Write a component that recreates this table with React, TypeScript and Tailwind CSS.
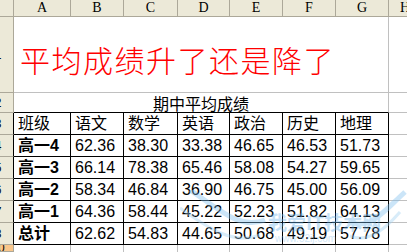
const letters = ["A", "B", "C", "D", "E", "F", "G"];

const table: string[][] = [
  ["班级", "语文", "数学", "英语", "政治", "历史", "地理"],
  ["高一4", "62.36", "38.30", "33.38", "46.65", "46.53", "51.73"],
  ["高一3", "66.14", "78.38", "65.46", "58.08", "54.27", "59.65"],
  ["高一2", "58.34", "46.84", "36.90", "46.75", "45.00", "56.09"],
  ["高一1", "64.36", "58.44", "45.22", "52.23", "51.82", "64.13"],
  ["总计", "62.62", "54.83", "44.65", "50.68", "49.19", "57.78"],
];

function RowHead({ n, black, active }: { n: number; black?: boolean; active?: boolean }) {
  return (
    <div
      className={`flex items-center overflow-hidden border-b border-r border-b-[#aca899] ${
        black ? "border-r-black" : "border-r-[#aca899]"
      } ${active ? "bg-[#f9c68b]" : "bg-[#ece9d8]"}`}
    >
      <div className="ml-[-16px] w-[28px] shrink-0 text-center font-['Liberation_Sans',sans-serif] text-[12px] text-black">
        {n}
      </div>
    </div>
  );
}

export default function App() {
  return (
    <div className="relative h-[252px] w-[407px] overflow-hidden bg-white font-['Liberation_Sans','Noto_Sans_CJK_SC',sans-serif] text-black">
      <div className="grid h-full w-full grid-cols-[14px_57px_53px_54px_52px_53px_53px_53px_1fr] grid-rows-[17px_76px_20px_repeat(6,22px)_1fr]">
        {/* column headers */}
        <div className="border-b border-r border-[#aca899] bg-[#ece9d8]" />
        {letters.map((l) => (
          <div
            key={l}
            className="flex items-center justify-center border-b border-r border-[#aca899] bg-[#ece9d8] font-['Liberation_Serif',serif] text-[14px] leading-none"
          >
            {l}
          </div>
        ))}
        <div className="flex items-center border-b border-[#aca899] bg-[#ece9d8] pl-[11px] font-['Liberation_Serif',serif] text-[14px] leading-none">
          H
        </div>

        {/* row 1: title */}
        <RowHead n={1} />
        <div className="col-span-7 flex items-center border-b border-r border-[#c0c0c0] pl-[6px] pt-[8px] font-['Noto_Sans_CJK_SC',sans-serif] text-[30px] font-light leading-none tracking-[1.5px] text-[#ff0000]">
          平均成绩升了还是降了
        </div>
        <div className="border-b border-[#c0c0c0]" />

        {/* row 2: subtitle */}
        <RowHead n={2} />
        <div className="col-span-7 flex items-center justify-center border-b border-r border-b-black border-r-[#c0c0c0] pt-[1px] font-['Noto_Sans_CJK_SC',sans-serif] text-[16px] leading-none">
          期中平均成绩
        </div>
        <div className="border-b border-[#c0c0c0]" />

        {/* table rows */}
        {table.map((row, r) => (
          <div key={r} className="contents">
            <RowHead n={r + 3} black />
            {row.map((cell, c) => (
              <div
                key={c}
                className={`flex items-center border-b border-r border-black pl-[4px] text-[16px] leading-none ${
                  c === 0 && r > 0 ? "font-bold" : ""
                }`}
              >
                {cell}
              </div>
            ))}
            <div className="border-b border-[#c0c0c0]" />
          </div>
        ))}

        {/* row 10 */}
        <RowHead n={10} active />
        {letters.map((l) => (
          <div key={l} className="border-r border-[#c0c0c0]" />
        ))}
        <div />
      </div>

      {/* watermark */}
      <div className="pointer-events-none absolute left-[180px] top-[190px] h-[62px] w-[227px] opacity-40">
        <svg width="227" height="62" viewBox="0 0 227 62" className="absolute left-0 top-0">
          <path d="M10 0 C 40 20, 60 40, 85 30" stroke="#7fbfee" strokeWidth="5" fill="none" />
          <path d="M0 18 C 30 40, 55 55, 80 45" stroke="#9fd0f2" strokeWidth="3" fill="none" />
          <path d="M225 2 C 200 25, 190 40, 168 32" stroke="#7fbfee" strokeWidth="5" fill="none" />
          <path d="M220 22 C 200 45, 185 52, 170 46" stroke="#9fd0f2" strokeWidth="3" fill="none" />
        </svg>
        <div className="absolute left-[88px] top-[22px] font-['Noto_Sans_CJK_SC',sans-serif] text-[19px] font-bold leading-none text-[#6fb4ea]">
          我爱IT技术网
        </div>
        <div className="absolute left-[95px] top-[44px] text-[10px] leading-none text-[#8fc4ec]">www.52ij.com</div>
      </div>
    </div>
  );
}
